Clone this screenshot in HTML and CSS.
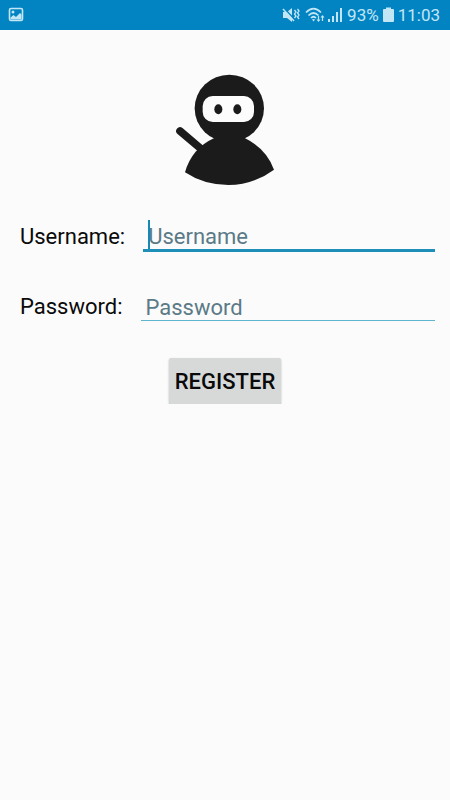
FILE: index.html
```html
<!DOCTYPE html>
<html lang="en">
<head>
<meta charset="utf-8">
<meta name="viewport" content="width=device-width, initial-scale=1">
<title>Register</title>
<link rel="stylesheet" href="styles.css">
</head>
<body>
<header class="status-bar">
  <svg class="icon" width="16" height="16" viewBox="0 0 16 16" aria-hidden="true">
    <rect x="1.500" y="1.500" width="13" height="12" rx="1.500" fill="none" stroke="currentColor" stroke-width="1.600"/>
    <circle cx="5" cy="5" r="1.500" fill="currentColor"/>
    <path d="M2.500 12.500v-2l3-2.500 2.500 2 4-4 1.500 1.500v5z" fill="currentColor"/>
  </svg>
  <div class="status-group">
    <svg class="icon" width="18" height="18" viewBox="0 0 18 18" aria-hidden="true">
      <path d="M1 6h4l5-4v14l-5-4H1z" fill="currentColor"/>
      <path d="M2 2l11 12" stroke="#0284c3" stroke-width="1.500"/>
      <path d="M1 3l11 12" stroke="currentColor" stroke-width="1.500"/>
      <path d="M12.500 4l1.500 2-1.500 2 1.500 2-1.500 2M15.500 3l1.500 2-1.500 2 1.500 2-1.500 2 1.500 2" fill="none" stroke="currentColor" stroke-width="1.300"/>
    </svg>
    <svg class="icon wifi" width="20" height="18" viewBox="0 0 20 18" aria-hidden="true">
      <path d="M1 6.500Q8.500-1 16 6.500M3.500 9.500q5-5 10 0M6 12q2.500-2.500 5 0" fill="none" stroke="currentColor" stroke-width="1.700"/>
      <path d="M7 13.500q1.500-1 3 0l-1.500 2z" fill="currentColor"/>
      <path d="M13.500 10v5M17.500 10v5" stroke="currentColor" stroke-width="1.200"/>
      <path d="M11.500 13.500h4l-2 2.500zM15.500 11.500h4l-2-2.500z" fill="currentColor"/>
    </svg>
    <svg class="icon" width="16" height="18" viewBox="0 0 16 18" aria-hidden="true">
      <path d="M1 13h2v3H1zM5 10h2v6H5zM9 6h2v10H9zM13 2h2v14h-2z" fill="currentColor"/>
    </svg>
    <span class="battery-level">93%</span>
    <svg class="icon battery" width="11" height="18" viewBox="0 0 11 18" aria-hidden="true">
      <path d="M3 1.500h5V3h2q1 0 1 1v11q0 1-1 1H1q-1 0-1-1V4q0-1 1-1h2z" fill="currentColor"/>
    </svg>
    <time class="clock">11:03</time>
  </div>
</header>
<main class="register">
  <svg class="logo" width="120" height="130" viewBox="0 0 360 390" role="img" aria-label="Ninja">
    <path d="M45 198l80 68" stroke="#1b1b1b" stroke-width="23" stroke-linecap="round"/>
    <ellipse cx="193" cy="130" rx="104" ry="101" fill="#1b1b1b"/>
    <path d="M148 219h91q65 32 88 95-62 46-137 46-73 0-130-38 20-72 88-103z" fill="#1b1b1b"/>
    <rect x="113" y="93" width="154" height="78" rx="30" fill="#fcfcfc"/>
    <ellipse cx="160" cy="133" rx="12" ry="15" fill="#1b1b1b"/>
    <ellipse cx="217" cy="133" rx="12" ry="15" fill="#1b1b1b"/>
  </svg>
  <form class="form">
    <div class="field">
      <label class="label" for="username">Username:</label>
      <div class="control control-active">
        <input class="input" id="username" type="text" placeholder="Username">
        <span class="caret"></span>
      </div>
    </div>
    <div class="field">
      <label class="label" for="password">Password:</label>
      <div class="control">
        <input class="input" id="password" type="password" placeholder="Password">
      </div>
    </div>
    <button class="button" type="button">REGISTER</button>
  </form>
</main>
</body>
</html>
```
FILE: styles.css
```css
* { box-sizing: border-box; }
body {
  margin: 0;
  background: #fbfbfb;
  color: #0a0a0a;
  font-family: Roboto, "Liberation Sans", sans-serif;
}
.status-bar {
  display: flex;
  align-items: center;
  justify-content: space-between;
  height: 30px;
  padding: 0 10px 0 8px;
  background: #0284c3;
  color: #c3e6f5;
}
.status-group {
  display: flex;
  align-items: center;
  font-size: 17px;
  line-height: 20px;
}
.icon { display: block; flex: none; }
.wifi { margin: 0 2px 0 5px; }
.battery { margin: 0 4px; }
.battery-level { margin-left: 4px; }
.register {
  display: flex;
  flex-direction: column;
  align-items: center;
  padding: 35px 15px 0 20px;
}
.logo { display: block; margin-right: 5px; }
.form {
  display: flex;
  flex-direction: column;
  gap: 30px;
  width: 100%;
  padding-top: 20px;
}
.field {
  display: flex;
  align-items: flex-end;
  gap: 18px;
  height: 37px;
  margin-bottom: 3px;
}
.label {
  padding-bottom: 2px;
  font-size: 22px;
  line-height: 26px;
}
.control {
  position: relative;
  flex: 1;
  min-width: 0;
  border-bottom: 3px solid #1d8fb8;
}
.control:not(.control-active) {
  margin-bottom: 1px;
  border-bottom: 1px solid #5fb4cf;
}
.input {
  display: block;
  width: 100%;
  height: 30px;
  padding: 5px 5px 0;
  border: 0;
  outline: 0;
  background: transparent;
  color: inherit;
  font: inherit;
  font-size: 22px;
  line-height: 25px;
}
.input::placeholder { color: #5b7a87; opacity: 1; }
.caret {
  position: absolute;
  left: 5px;
  top: 1px;
  bottom: 0;
  width: 2px;
  background: #1688b4;
}
.button {
  align-self: center;
  height: 46px;
  margin: 3px 5px 0 0;
  padding: 0 6px;
  border: 0;
  border-radius: 2px;
  background: #d7d8d8;
  box-shadow: 0 1px 2px rgba(0, 0, 0, 0.3);
  color: #0a0a0a;
  font: inherit;
  font-size: 22px;
  font-weight: 500;
}
```
